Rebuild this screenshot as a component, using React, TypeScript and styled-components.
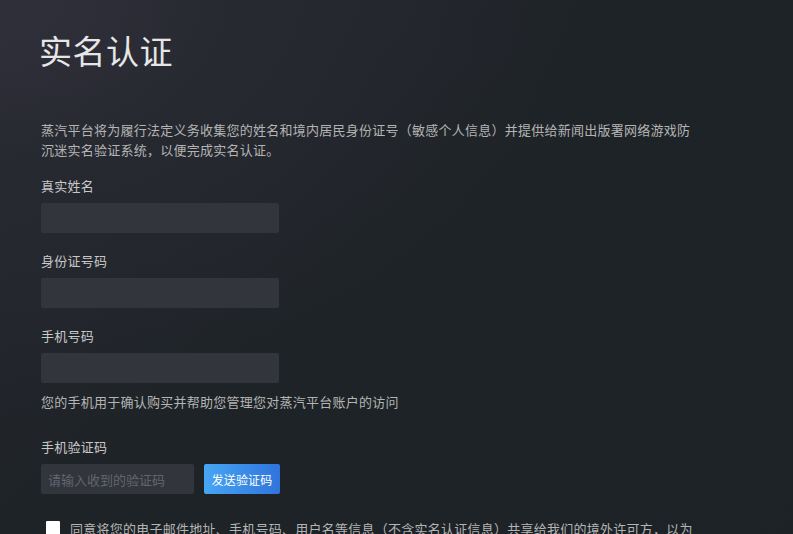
import React from 'react';
import styled, { createGlobalStyle } from 'styled-components';

const GlobalStyle = createGlobalStyle`
  html, body {
    margin: 0;
    padding: 0;
    background: #1d2226;
  }
  body {
    font-family: "Noto Sans CJK SC", "Noto Sans", sans-serif;
  }
`;

// 整页背景
const Page = styled.div`
  min-height: 534px;
  box-sizing: border-box;
  padding: 29px 0 0 41px;
  background:
    radial-gradient(ellipse 620px 420px at 0% 0%, rgba(48, 48, 58, 0.95) 0%, rgba(40, 42, 50, 0.6) 45%, rgba(29, 34, 38, 0) 100%),
    linear-gradient(135deg, #262830 0%, #1e2327 45%, #1c2226 100%);
  overflow: hidden;
`;

const Title = styled.h1`
  margin: 0 0 0 -2px;
  font-size: 33px;
  line-height: 42px;
  font-weight: 400;
  color: #e6e6e6;
  letter-spacing: 0.5px;
`;

const Intro = styled.p`
  margin: 49px 0 0;
  max-width: 655px;
  font-size: 13px;
  line-height: 20px;
  letter-spacing: 0.25px;
  color: #b4b4b4;
`;

const Field = styled.div<{ $gap?: number }>`
  display: flex;
  flex-direction: column;
  margin-top: ${p => p.$gap ?? 18}px;
`;

const Label = styled.label`
  font-size: 13px;
  line-height: 20px;
  letter-spacing: 0.25px;
  color: #c8c8c8;
  margin-bottom: 7px;
`;

const Input = styled.input<{ $width?: number }>`
  box-sizing: border-box;
  width: ${p => p.$width ?? 238}px;
  height: 30px;
  border: none;
  border-radius: 2px;
  background: #32353c;
  padding: 0 7px;
  font-family: inherit;
  font-size: 13px;
  color: #dcdcdc;
  outline: none;

  &::placeholder {
    color: #62656c;
  }
`;

const Hint = styled.div`
  margin-top: 9px;
  font-size: 13px;
  line-height: 20px;
  letter-spacing: 0.25px;
  color: #b4b4b4;
`;

const Row = styled.div`
  display: flex;
  align-items: center;
  gap: 10px;
`;

const SendButton = styled.button`
  height: 30px;
  width: 76px;
  border: none;
  border-radius: 2px;
  padding: 0;
  background: linear-gradient(90deg, #47a6f3 0%, #2f74dc 100%);
  color: #ffffff;
  font-family: inherit;
  font-size: 12px;
  letter-spacing: 0.2px;
  cursor: pointer;
`;

const Agree = styled.label`
  display: flex;
  align-items: flex-start;
  gap: 10px;
  margin-top: 25px;
  margin-left: 5px;
  font-size: 13px;
  line-height: 20px;
  letter-spacing: 0.25px;
  color: #b4b4b4;
  max-width: 650px;
`;

const Box = styled.span`
  flex: none;
  width: 14px;
  height: 14px;
  margin-top: 2px;
  background: #ffffff;
  border-radius: 1px;
`;

export default function App() {
  return (
    <>
      <GlobalStyle />
      <Page>
        <Title>实名认证</Title>
        <Intro>
          蒸汽平台将为履行法定义务收集您的姓名和境内居民身份证号（敏感个人信息）并提供给新闻出版署网络游戏防沉迷实名验证系统，以便完成实名认证。
        </Intro>

        <Field $gap={16}>
          <Label>真实姓名</Label>
          <Input />
        </Field>

        <Field>
          <Label>身份证号码</Label>
          <Input />
        </Field>

        <Field>
          <Label>手机号码</Label>
          <Input />
        </Field>
        <Hint>您的手机用于确认购买并帮助您管理您对蒸汽平台账户的访问</Hint>

        <Field $gap={25}>
          <Label>手机验证码</Label>
          <Row>
            <Input $width={153} placeholder="请输入收到的验证码" />
            <SendButton>发送验证码</SendButton>
          </Row>
        </Field>

        <Agree>
          <Box />
          <span>
            同意将您的电子邮件地址、手机号码、用户名等信息（不含实名认证信息）共享给我们的境外许可方，以为您提供更好的服务。
          </span>
        </Agree>
      </Page>
    </>
  );
}
